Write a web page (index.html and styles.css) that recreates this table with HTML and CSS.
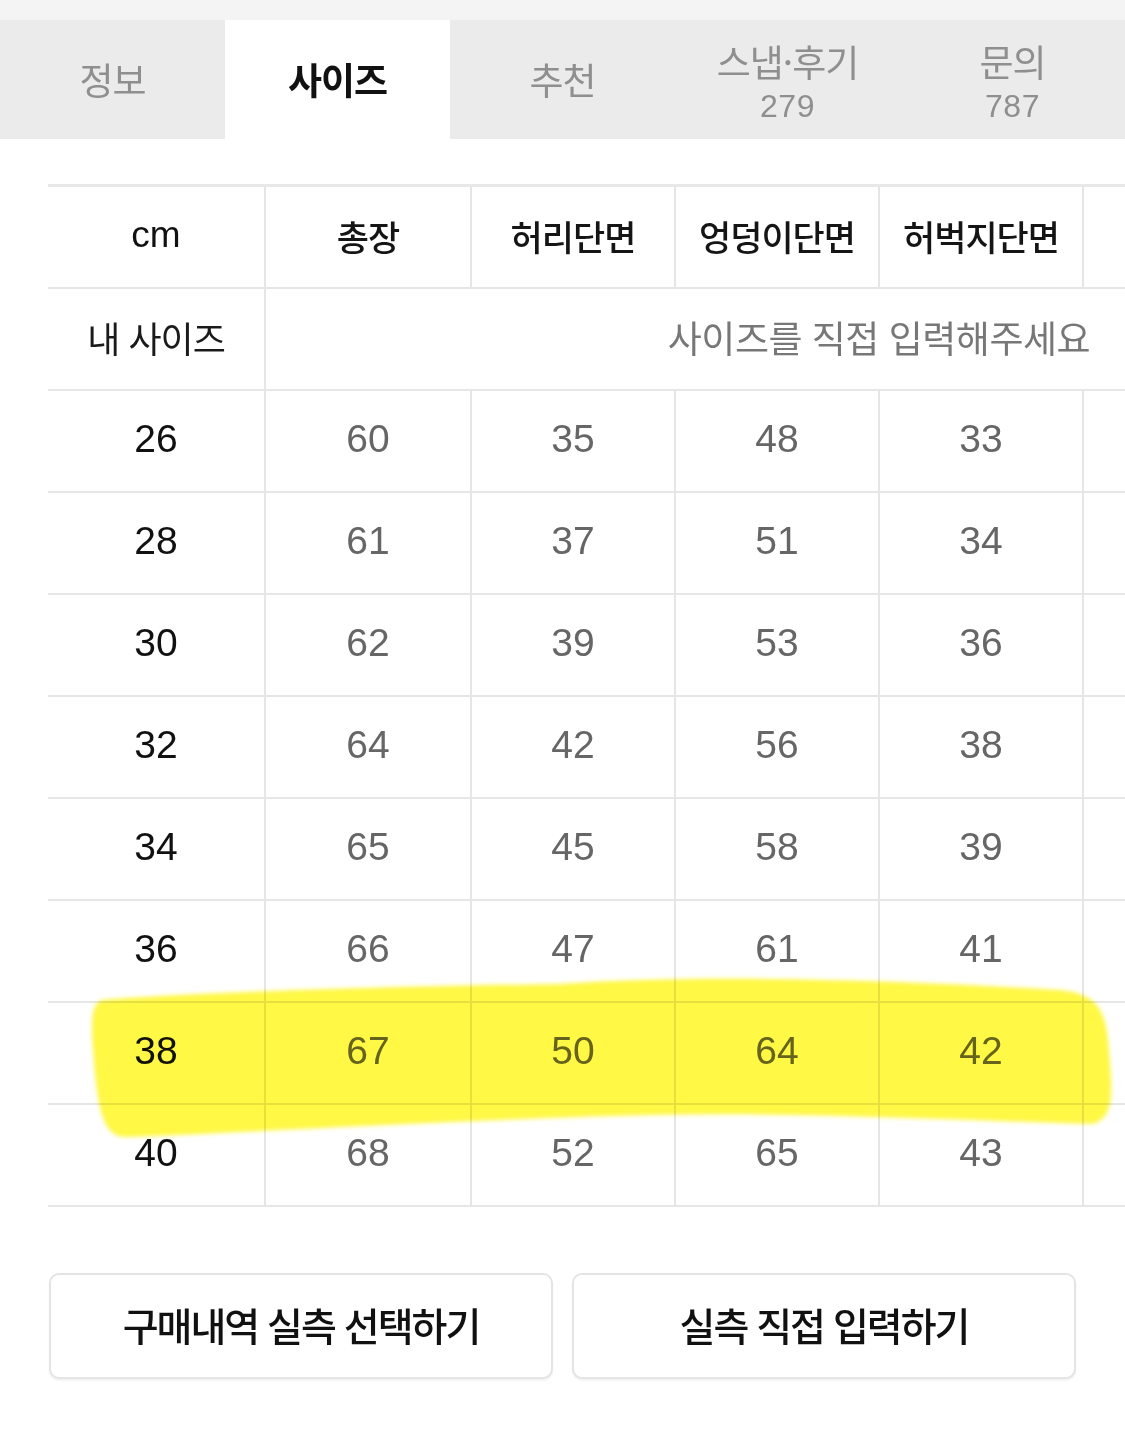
FILE: index.html
```html
<!DOCTYPE html>
<html lang="ko">
<head>
<meta charset="utf-8">
<title>사이즈</title>
<link rel="stylesheet" href="styles.css">
</head>
<body>
<div class="page">
  <div class="topstrip"></div>
  <nav class="tabs">
    <div class="tab"><span class="tab-label">정보</span></div>
    <div class="tab active"><span class="tab-label">사이즈</span></div>
    <div class="tab"><span class="tab-label">추천</span></div>
    <div class="tab two"><span class="tab-label">스냅·후기</span><span class="tab-count">279</span></div>
    <div class="tab two"><span class="tab-label">문의</span><span class="tab-count">787</span></div>
  </nav>

  <div class="table-wrap">
    <table class="size-table">
      <colgroup>
        <col class="c1"><col class="c2"><col class="c3"><col class="c3"><col class="c3"><col class="c3">
      </colgroup>
      <thead>
        <tr class="head">
          <th class="first">cm</th><th>총장</th><th>허리단면</th><th>엉덩이단면</th><th>허벅지단면</th><th></th>
        </tr>
      </thead>
      <tbody>
        <tr class="mine">
          <td class="first mine-label">내 사이즈</td>
          <td class="mine-input" colspan="5">사이즈를 직접 입력해주세요</td>
        </tr>
        <tr><td class="first">26</td><td>60</td><td>35</td><td>48</td><td>33</td><td></td></tr>
        <tr><td class="first">28</td><td>61</td><td>37</td><td>51</td><td>34</td><td></td></tr>
        <tr><td class="first">30</td><td>62</td><td>39</td><td>53</td><td>36</td><td></td></tr>
        <tr><td class="first">32</td><td>64</td><td>42</td><td>56</td><td>38</td><td></td></tr>
        <tr><td class="first">34</td><td>65</td><td>45</td><td>58</td><td>39</td><td></td></tr>
        <tr><td class="first">36</td><td>66</td><td>47</td><td>61</td><td>41</td><td></td></tr>
        <tr><td class="first">38</td><td>67</td><td>50</td><td>64</td><td>42</td><td></td></tr>
        <tr><td class="first">40</td><td>68</td><td>52</td><td>65</td><td>43</td><td></td></tr>
      </tbody>
    </table>
  </div>

  <div class="buttons">
    <button class="btn">구매내역 실측 선택하기</button>
    <button class="btn">실측 직접 입력하기</button>
  </div>

  <svg class="marker" width="1125" height="1434" viewBox="0 0 1125 1434" aria-hidden="true">
    <defs>
      <filter id="soft" x="-5%" y="-20%" width="110%" height="140%">
        <feGaussianBlur stdDeviation="2.2"/>
      </filter>
    </defs>
    <path filter="url(#soft)" fill="#fff845" d="M 102 1000 C 200 992, 400 986, 560 984 C 700 974, 900 980, 1060 990 C 1100 994, 1106 1012, 1109 1050 C 1112 1090, 1116 1118, 1092 1124 C 950 1120, 800 1112, 650 1115 C 450 1120, 300 1130, 128 1137 C 104 1139, 98 1112, 94 1062 C 91 1024, 90 1004, 102 1000 Z"/>
  </svg>
</div>
</body>
</html>
```

FILE: styles.css
```css
* { box-sizing: border-box; }

html, body {
  margin: 0;
  padding: 0;
  background: #ffffff;
}

body {
  font-family: "Liberation Sans", "Noto Sans CJK KR", sans-serif;
  color: #111;
  overflow: hidden;
}

.page {
  position: relative;
  width: 1125px;
  height: 1434px;
  overflow: hidden;
}

.topstrip {
  height: 20px;
  background: #f4f4f4;
}

.tabs {
  display: flex;
  height: 119px;
  background: #ebebeb;
}

.tab {
  width: 225px;
  display: flex;
  flex-direction: column;
  align-items: center;
  justify-content: center;
  color: #8f8f8f;
  padding-bottom: 2px;
}

.tab.active {
  background: #ffffff;
  color: #111;
}

.tab-label {
  font-family: "Noto Sans CJK KR", sans-serif;
  font-size: 37px;
  line-height: 44px;
  letter-spacing: -1px;
}

.tab.active .tab-label {
  font-weight: 700;
}

.tab.two {
  padding-top: 8px;
  padding-bottom: 0;
}

.tab-count {
  font-size: 32px;
  line-height: 46px;
  letter-spacing: 0.5px;
}

.table-wrap {
  margin-top: 45px;
  padding-left: 48px;
  width: 1125px;
  overflow: hidden;
}

.size-table {
  border-collapse: collapse;
  table-layout: fixed;
  width: 1239px;
  border-top: 3px solid #e8e8e8;
}

.size-table .c1 { width: 217px; }
.size-table .c2 { width: 206px; }
.size-table .c3 { width: 204px; }

.size-table th,
.size-table td {
  height: 102px;
  padding: 0 0 3px 0;
  text-align: center;
  vertical-align: middle;
  border-bottom: 2px solid #e6e6e6;
  border-left: 2px solid #e6e6e6;
  font-size: 39px;
  color: #666;
  font-weight: 400;
}

.size-table th.first,
.size-table td.first {
  border-left: none;
  color: #111;
}

.size-table th {
  font-family: "Noto Sans CJK KR", sans-serif;
  font-size: 35px;
  font-weight: 500;
  color: #151515;
  letter-spacing: -1px;
}

.size-table th.first {
  font-family: "Liberation Sans", sans-serif;
  font-size: 37px;
  letter-spacing: 0;
}

.size-table td.mine-label {
  font-family: "Noto Sans CJK KR", sans-serif;
  font-size: 36px;
  color: #1a1a1a;
  letter-spacing: -1px;
}

.size-table td.mine-input {
  font-family: "Noto Sans CJK KR", sans-serif;
  font-size: 37px;
  color: #777;
  text-align: right;
  padding-right: 197px;
  letter-spacing: -0.5px;
  white-space: nowrap;
}

.buttons {
  display: flex;
  gap: 19px;
  padding-left: 49px;
  margin-top: 66px;
}

.btn {
  width: 504px;
  height: 106px;
  background: #ffffff;
  border: 2px solid #e4e4e4;
  border-radius: 10px;
  box-shadow: 0 2px 2px rgba(0,0,0,0.05);
  font-family: "Noto Sans CJK KR", sans-serif;
  font-size: 39px;
  font-weight: 500;
  color: #111;
  letter-spacing: -2px;
  padding: 0 0 4px 0;
}

.marker {
  position: absolute;
  left: 0;
  top: 0;
  mix-blend-mode: multiply;
  pointer-events: none;
}
```
